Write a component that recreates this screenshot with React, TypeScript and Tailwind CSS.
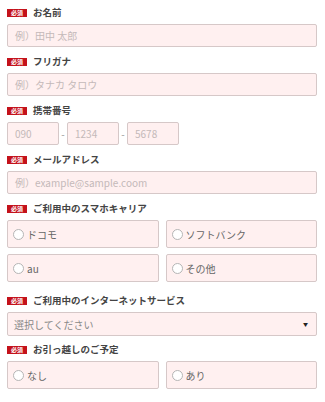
import React from 'react'

const font = { fontFamily: '"Noto Sans CJK JP", "Noto Sans", sans-serif' }

function Label({ text, className = '' }: { text: string; className?: string }) {
  return (
    <div className={`flex h-[14px] items-center gap-[6px] ${className}`}>
      <span className="flex h-[8px] w-[20px] items-center justify-center bg-[#c4121b] text-[6px] font-bold leading-none text-white">
        必須
      </span>
      <span className="text-[9.5px] font-bold leading-none text-[#444]">{text}</span>
    </div>
  )
}

function TextInput({ placeholder, className = '' }: { placeholder: string; className?: string }) {
  return (
    <div
      className={`flex h-[23px] items-center rounded-[2px] border border-[#d6c8c8] bg-[#fff0f0] px-[7px] text-[10px] text-[#c4b9b9] ${className}`}
    >
      {placeholder}
    </div>
  )
}

function Radio({ text }: { text: string }) {
  return (
    <div className="flex h-[28px] items-center gap-[3px] rounded-[2px] border border-[#d6c8c8] bg-[#fff0f0] pl-[5px] text-[10px] text-[#666]">
      <span className="h-[11px] w-[11px] rounded-full border border-[#b5b5b5] bg-white" />
      <span>{text}</span>
    </div>
  )
}

export default function App() {
  return (
    <div className="h-[402px] w-[325px] overflow-hidden bg-white pl-[7px] pr-[8px] pt-[6px]" style={font}>
      <Label text="お名前" />
      <TextInput placeholder="例）田中 太郎" className="mt-[4px]" />

      <Label text="フリガナ" className="mt-[8px]" />
      <TextInput placeholder="例）タナカ タロウ" className="mt-[4px]" />

      <Label text="携帯番号" className="mt-[8px]" />
      <div className="mt-[4px] flex items-center">
        <TextInput placeholder="090" className="w-[52px]" />
        <span className="w-[8px] text-center text-[10px] text-[#999]">-</span>
        <TextInput placeholder="1234" className="w-[52px]" />
        <span className="w-[8px] text-center text-[10px] text-[#999]">-</span>
        <TextInput placeholder="5678" className="w-[52px]" />
      </div>

      <Label text="メールアドレス" className="mt-[8px]" />
      <TextInput placeholder="例）example@sample.coom" className="mt-[4px]" />

      <Label text="ご利用中のスマホキャリア" className="mt-[8px]" />
      <div className="mt-[4px] grid grid-cols-2 gap-x-[7px] gap-y-[6px]">
        <Radio text="ドコモ" />
        <Radio text="ソフトバンク" />
        <Radio text="au" />
        <Radio text="その他" />
      </div>

      <Label text="ご利用中のインターネットサービス" className="mt-[12px]" />
      <div className="mt-[4px] flex h-[24px] items-center justify-between rounded-[2px] border border-[#d6c8c8] bg-[#fff0f0] pl-[6px] pr-[8px] text-[10px] text-[#888]">
        <span>選択してください</span>
        <span className="text-[5px] text-[#222]">▼</span>
      </div>

      <Label text="お引っ越しのご予定" className="mt-[7px]" />
      <div className="mt-[4px] grid grid-cols-2 gap-x-[7px]">
        <Radio text="なし" />
        <Radio text="あり" />
      </div>
    </div>
  )
}
